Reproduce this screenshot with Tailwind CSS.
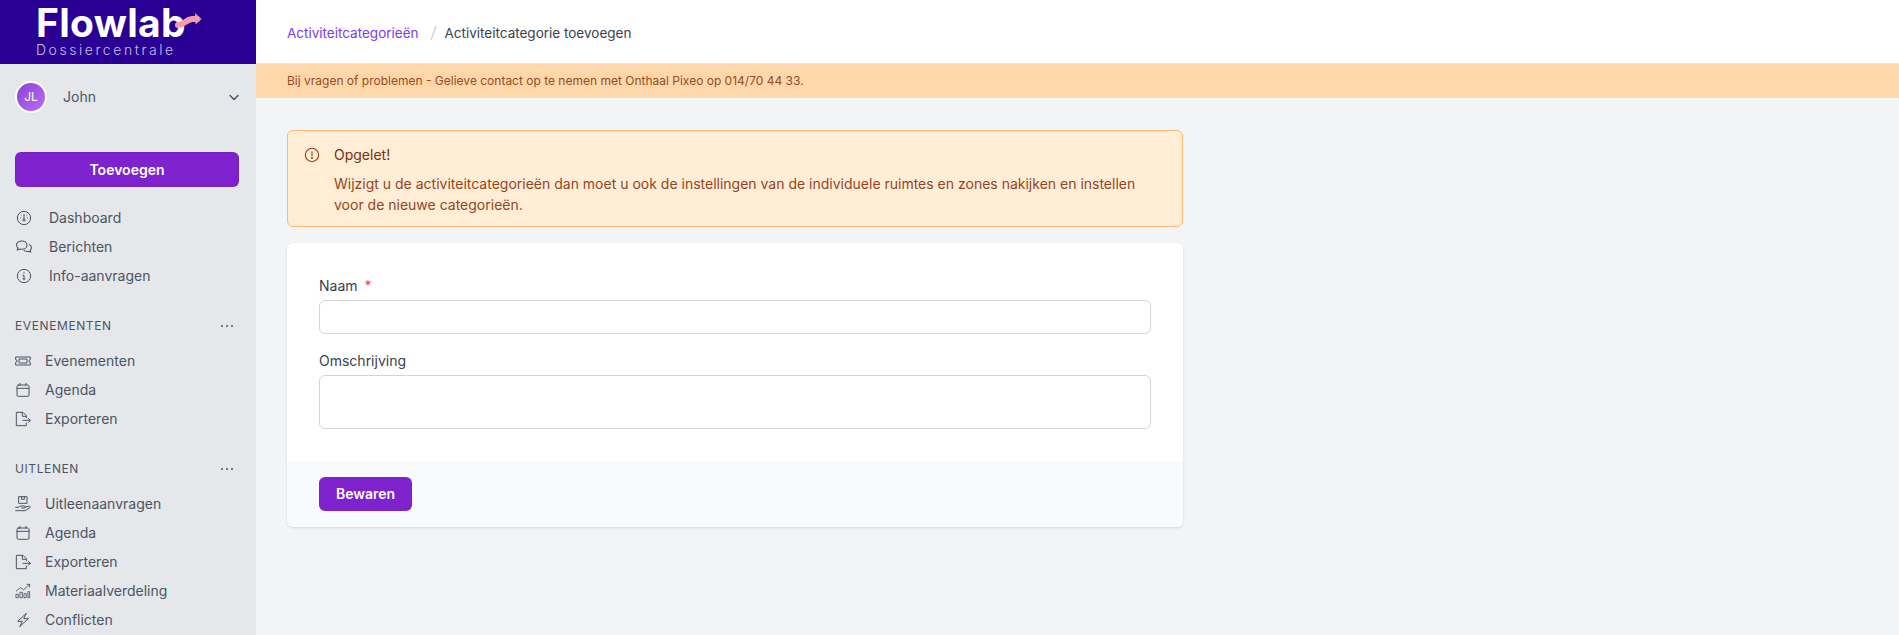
<!DOCTYPE html>
<html lang="nl">
<head>
    <meta charset="UTF-8" />
    <title>Activiteitcategorie toevoegen</title>
    <script src="https://cdn.jsdelivr.net/npm/@tailwindcss/browser@4"></script>
</head>
<body class="h-screen overflow-hidden bg-[#f3f4f6] font-['Inter',sans-serif]">
<div class="flex h-full">
    <!-- Sidebar -->
    <aside class="w-64 shrink-0 h-full overflow-hidden bg-[#e5e7eb] flex flex-col">
        <div class="h-16 shrink-0 bg-[#2a0094] pl-[36px] pt-[5px] relative">
            <div class="text-white font-bold text-[39px] leading-[36px] tracking-[0.3px]">Flowlab</div>
            <div class="text-[#c9bfe8] text-[14px] leading-[14px] tracking-[2.55px] font-light mt-[2px]">Dossiercentrale</div>
            <svg class="absolute left-[172px] top-[10px]" width="32" height="22" viewBox="0 0 32 22" fill="none"><path d="M6 15c6 0 7-5 14-6h5" stroke="#f59ca9" stroke-width="6" stroke-linecap="round"/><path d="M23 3l6.500 6-6 5.500z" fill="#f59ca9"/></svg>
        </div>

        <div class="flex items-center h-[48px] mt-[9px] pl-[15px] pr-[14px] shrink-0">
            <div class="w-[32px] h-[32px] rounded-full border-2 border-white bg-gradient-to-br from-[#8b3fd9] to-[#b96ff0] flex items-center justify-center text-[#f3e8ff] text-[12px] font-medium">JL</div>
            <span class="ml-[16px] text-sm text-[#4b5563]">John</span>
            <svg class="ml-auto w-4 h-4 text-[#4b5563]" viewBox="0 0 20 20" fill="none" stroke="currentColor" stroke-width="1.8"><path d="M5 8l5 5 5-5" stroke-linecap="round" stroke-linejoin="round"/></svg>
        </div>

        <div class="px-[15px] mt-[31px] shrink-0">
            <button class="w-[224px] h-[35px] rounded-md bg-[#7e22ce] border border-[#6b21a8]/40 text-white text-sm font-semibold">Toevoegen</button>
        </div>

        <nav class="mt-[16px] px-[15px] text-sm text-[#4b5563]">
            <a class="flex items-center h-[29px]"><svg class="w-4 h-4 shrink-0 ml-[1px]" viewBox="0 0 24 24" fill="none" stroke="currentColor" stroke-width="1.5"><circle cx="12" cy="12" r="10"/><path d="M12 6v7M6 12h1M17 12h1M8 8l.5.5M16 8l-.5.5"/><circle cx="12" cy="15" r="1.6"/></svg><span class="ml-[17px]">Dashboard</span></a>
            <a class="flex items-center h-[29px]"><svg class="w-[18px] h-[18px] shrink-0" viewBox="0 0 24 24" fill="none" stroke="currentColor" stroke-width="1.4" stroke-linejoin="round"><path d="M9 4c4 0 7 2.400 7 5.500S13 15 9 15c-.8 0-1.600-.1-2.300-.3L3 16l1-3C2.700 12 2 10.800 2 9.500 2 6.400 5 4 9 4z"/><path d="M18.500 8.500c2 .9 3.500 2.500 3.500 4.500 0 1.300-.7 2.500-1.800 3.300L21 19l-3.200-1.200c-2.600.4-5-.3-6.300-1.800"/></svg><span class="ml-[16px]">Berichten</span></a>
            <a class="flex items-center h-[29px]"><svg class="w-4 h-4 shrink-0 ml-[1px]" viewBox="0 0 24 24" fill="none" stroke="currentColor" stroke-width="1.5"><circle cx="12" cy="12" r="10"/><path d="M10.500 11H12v5.500M10.500 16.500h3" stroke-linecap="round"/><circle cx="12" cy="7.500" r="1" fill="currentColor" stroke="none"/></svg><span class="ml-[17px]">Info-aanvragen</span></a>

            <div class="flex items-center justify-between mt-[26px] h-[19px] pr-[7px]">
                <span class="text-xs uppercase tracking-[0.6px] text-[#4b5563]">Evenementen</span>
                <svg class="w-[14px] h-[14px]" viewBox="0 0 14 14" fill="currentColor"><circle cx="2" cy="7" r="1"/><circle cx="7" cy="7" r="1"/><circle cx="12" cy="7" r="1"/></svg>
            </div>
            <div class="mt-[11px]">
                <a class="flex items-center h-[29px]"><svg class="w-4 h-4 shrink-0" viewBox="0 0 24 24" fill="none" stroke="currentColor" stroke-width="1.5" stroke-linejoin="round"><path d="M1 6h22v4a2 2 0 000 4v4H1v-4a2 2 0 000-4z"/><rect x="6" y="9" width="12" height="6"/></svg><span class="ml-[14px]">Evenementen</span></a>
                <a class="flex items-center h-[29px]"><svg class="w-4 h-4 shrink-0" viewBox="0 0 24 24" fill="none" stroke="currentColor" stroke-width="1.5" stroke-linecap="round"><rect x="3" y="4.500" width="18" height="17" rx="2"/><path d="M3 9.500h18M7.500 2v3M16.500 2v3"/></svg><span class="ml-[14px]">Agenda</span></a>
                <a class="flex items-center h-[29px]"><svg class="w-4 h-4 shrink-0" viewBox="0 0 24 24" fill="none" stroke="currentColor" stroke-width="1.5" stroke-linejoin="round" stroke-linecap="round"><path d="M17 10V7l-5-5H2v20h15v-4"/><path d="M11 2v6h6M12 14h11M20 11l3 3-3 3"/></svg><span class="ml-[14px]">Exporteren</span></a>
            </div>

            <div class="flex items-center justify-between mt-[26px] h-[19px] pr-[7px]">
                <span class="text-xs uppercase tracking-[0.6px] text-[#4b5563]">Uitlenen</span>
                <svg class="w-[14px] h-[14px]" viewBox="0 0 14 14" fill="currentColor"><circle cx="2" cy="7" r="1"/><circle cx="7" cy="7" r="1"/><circle cx="12" cy="7" r="1"/></svg>
            </div>
            <div class="mt-[11px]">
                <a class="flex items-center h-[29px]"><svg class="w-4 h-4 shrink-0" viewBox="0 0 24 24" fill="none" stroke="currentColor" stroke-width="1.5" stroke-linejoin="round" stroke-linecap="round"><rect x="6" y="1" width="12" height="10"/><path d="M10 1v4h4V1M1 17h4l3-2h6c2 0 2 3 0 3h-4M15 17l6-2c2 0 2 2 1 3l-7 4H1"/></svg><span class="ml-[14px]">Uitleenaanvragen</span></a>
                <a class="flex items-center h-[29px]"><svg class="w-4 h-4 shrink-0" viewBox="0 0 24 24" fill="none" stroke="currentColor" stroke-width="1.5" stroke-linecap="round"><rect x="3" y="4.500" width="18" height="17" rx="2"/><path d="M3 9.500h18M7.500 2v3M16.500 2v3"/></svg><span class="ml-[14px]">Agenda</span></a>
                <a class="flex items-center h-[29px]"><svg class="w-4 h-4 shrink-0" viewBox="0 0 24 24" fill="none" stroke="currentColor" stroke-width="1.5" stroke-linejoin="round" stroke-linecap="round"><path d="M17 10V7l-5-5H2v20h15v-4"/><path d="M11 2v6h6M12 14h11M20 11l3 3-3 3"/></svg><span class="ml-[14px]">Exporteren</span></a>
                <a class="flex items-center h-[29px]"><svg class="w-4 h-4 shrink-0" viewBox="0 0 24 24" fill="none" stroke="currentColor" stroke-width="1.300" stroke-linecap="round" stroke-linejoin="round"><path d="M2 12l6-5 5 3 9-8M18 2h4v4"/><rect x="2" y="17" width="3" height="5"/><rect x="8" y="14" width="3" height="8"/><rect x="14" y="16" width="3" height="6"/><rect x="20" y="13" width="2" height="9"/></svg><span class="ml-[14px]">Materiaalverdeling</span></a>
                <a class="flex items-center h-[29px]"><svg class="w-4 h-4 shrink-0" viewBox="0 0 24 24" fill="none" stroke="currentColor" stroke-width="1.5" stroke-linejoin="round"><path d="M17 2L4 14h7l-4 8 13-12h-7z"/></svg><span class="ml-[14px]">Conflicten</span></a>
            </div>
        </nav>
    </aside>

    <!-- Main -->
    <div class="flex-1 min-w-0 flex flex-col">
        <header class="h-16 shrink-0 bg-white border-b border-[#e5e7eb] flex items-center px-[31px] pt-[3px] text-[13.5px]">
            <a class="text-[#7c3aed]">Activiteitcategorieën</a>
            <svg class="mx-[9px] text-[#d1d5db] translate-x-[1px]" width="8" height="20" viewBox="0 0 8 20" fill="none" stroke="currentColor" stroke-width="1.5"><path d="M7 3L2 17"/></svg>
            <span class="text-[#374151]">Activiteitcategorie toevoegen</span>
        </header>
        <div class="h-[34px] shrink-0 bg-[#fed7aa] flex items-center px-[31px] text-xs text-[#9a4a1c]">Bij vragen of problemen - Gelieve contact op te nemen met Onthaal Pixeo op 014/70 44 33.</div>

        <main class="px-[31px] pt-[32px]">
            <div class="w-[896px] h-[97px] rounded-md border border-[#fdba74] bg-[#ffedd5] pl-[16px] pt-[14px] flex">
                <svg class="w-4 h-4 mt-[2px] shrink-0 text-[#9a3412]" viewBox="0 0 24 24" fill="none" stroke="currentColor" stroke-width="1.6" stroke-linecap="round"><circle cx="12" cy="12" r="10"/><path d="M12 7v6"/><circle cx="12" cy="16.500" r=".7" fill="currentColor"/></svg>
                <div class="ml-[14px] text-sm text-[#94451f]">
                    <div class="leading-[20px] text-[#7c2d12]">Opgelet!</div>
                    <p class="mt-[8px] leading-[21px] w-[820px]">Wijzigt u de activiteitcategorieën dan moet u ook de instellingen van de individuele ruimtes en zones nakijken en instellen voor de nieuwe categorieën.</p>
                </div>
            </div>

            <form class="w-[896px] mt-[16px] rounded-md bg-white shadow overflow-hidden">
                <div class="px-[32px] pt-[33px] h-[218px]">
                    <label class="block text-sm text-[#374151] leading-[20px]">Naam <span class="text-[#ef4444] ml-[3px]">*</span></label>
                    <input type="text" class="block w-full h-[34px] mt-[4px] rounded-md border border-[#d1d5db] bg-white" />
                    <label class="block text-sm text-[#374151] leading-[20px] mt-[17px]">Omschrijving</label>
                    <textarea class="block w-full h-[54px] mt-[4px] rounded-md border border-[#d1d5db] bg-white resize-none"></textarea>
                </div>
                <div class="h-[66px] bg-[#f9fafb] px-[32px] pt-[16px]">
                    <button type="button" class="w-[93px] h-[34px] rounded-md bg-[#7e22ce] text-white text-sm font-semibold">Bewaren</button>
                </div>
            </form>
        </main>
    </div>
</div>
</body>
</html>
